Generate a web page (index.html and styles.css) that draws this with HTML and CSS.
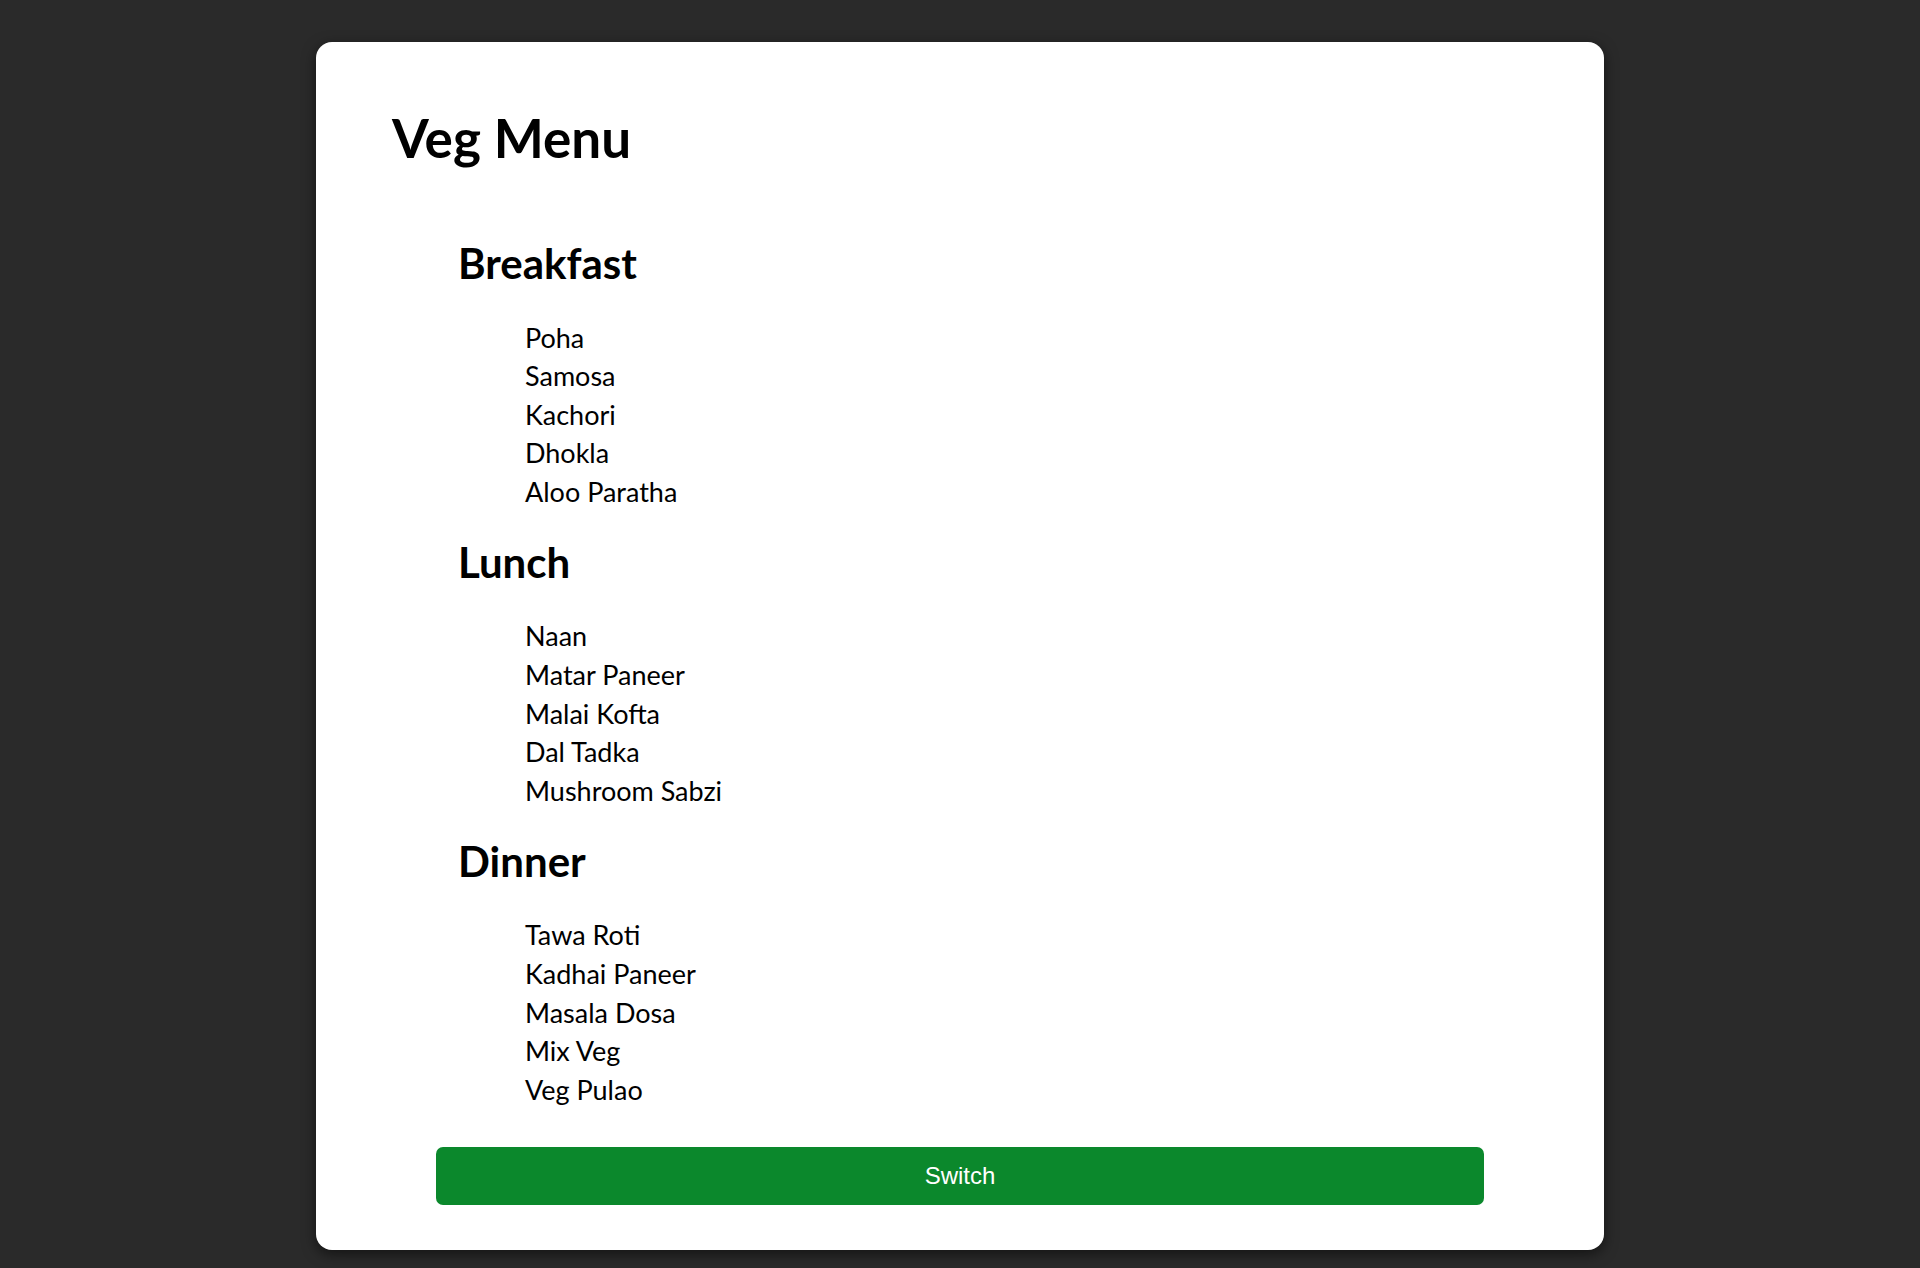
FILE: index.html
```html
<!DOCTYPE html>
<html lang="en">
<head>
<meta charset="utf-8">
<title>Veg Menu</title>
<link rel="stylesheet" href="styles.css">
</head>
<body>
<main class="card">
  <h1 class="title">Veg Menu</h1>
  <section class="meal">
    <h2 class="meal-name">Breakfast</h2>
    <ul class="items">
      <li>Poha</li>
      <li>Samosa</li>
      <li>Kachori</li>
      <li>Dhokla</li>
      <li>Aloo Paratha</li>
    </ul>
  </section>
  <section class="meal">
    <h2 class="meal-name">Lunch</h2>
    <ul class="items">
      <li>Naan</li>
      <li>Matar Paneer</li>
      <li>Malai Kofta</li>
      <li>Dal Tadka</li>
      <li>Mushroom Sabzi</li>
    </ul>
  </section>
  <section class="meal">
    <h2 class="meal-name">Dinner</h2>
    <ul class="items">
      <li>Tawa Roti</li>
      <li>Kadhai Paneer</li>
      <li>Masala Dosa</li>
      <li>Mix Veg</li>
      <li>Veg Pulao</li>
    </ul>
  </section>
  <button class="switch" type="button">Switch</button>
</main>
</body>
</html>
```

FILE: styles.css
```css
html, body {
  margin: 0;
  padding: 0;
}
body {
  background: #2a2a2a;
  padding: 42px 0 18px;
  font-family: Lato, "Open Sans", sans-serif;
  color: #000;
}
.card {
  box-sizing: border-box;
  width: 1288px;
  margin: 0 auto;
  background: #fff;
  border-radius: 16px;
  box-shadow: 0 4px 14px rgba(0, 0, 0, 0.55);
  padding: 64px 76px 45px;
  display: flex;
  flex-direction: column;
}
.title {
  margin: 0 0 68px;
  font-size: 53px;
  line-height: 64.8px;
  font-weight: 700;
}
.meal {
  margin: 0 0 26.3px 66px;
}
.meal:last-of-type {
  margin-bottom: 0;
}
.meal-name {
  margin: 0;
  font-size: 42px;
  line-height: 49.2px;
  font-weight: 700;
}
.items {
  list-style: none;
  margin: 30.5px 0 0;
  padding: 0 0 0 67px;
  font-size: 27px;
  line-height: 38.6px;
}
.switch {
  margin: 37.8px 44px 0;
  height: 58px;
  border: none;
  border-radius: 7px;
  background: #0b882c;
  color: #fff;
  font-family: "Liberation Sans", Arial, sans-serif;
  font-size: 24px;
  cursor: pointer;
}
```
